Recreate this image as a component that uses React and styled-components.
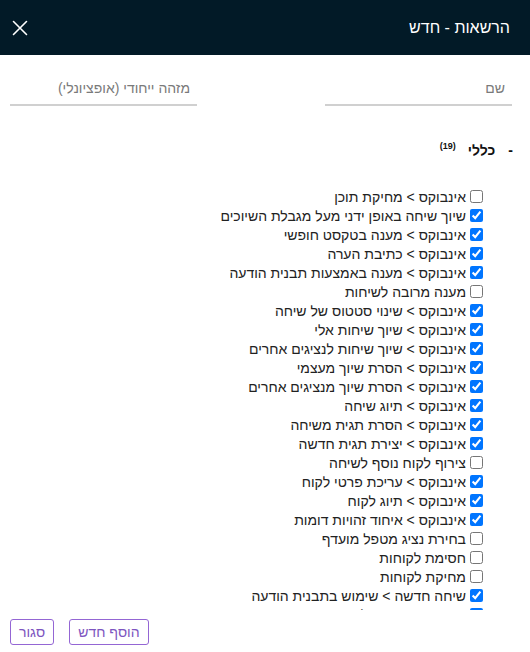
import React from "react";
import styled, { createGlobalStyle } from "styled-components";

const Global = createGlobalStyle`
  html, body { margin: 0; padding: 0; background: #fff; }
  body { font-family: "Liberation Sans", Arial, sans-serif; direction: rtl; }
  * { box-sizing: border-box; }
`;

const Page = styled.div`
  width: 530px;
  height: 652px;
  display: flex;
  flex-direction: column;
  background: #fff;
  overflow: hidden;
`;

const Header = styled.header`
  height: 55px;
  flex: none;
  background: #021a27;
  display: flex;
  align-items: center;
  justify-content: space-between;
  padding: 0 20px 0 12px;
`;

const Title = styled.h1`
  margin: 0;
  font-size: 16px;
  font-weight: normal;
  color: #fff;
`;

const CloseBtn = styled.button`
  border: 0;
  background: none;
  padding: 0;
  width: 16px;
  height: 16px;
  display: flex;
  cursor: pointer;
`;

const FormRow = styled.div`
  display: flex;
  justify-content: space-between;
  padding: 21px 18px 0 10px;
  height: 50px;
  flex: none;
`;

const Field = styled.input`
  width: 187px;
  height: 30px;
  border: 0;
  border-bottom: 2px solid #d0d0d0;
  outline: none;
  padding: 0 7px 5px 7px;
  font-family: inherit;
  font-size: 14px;
  color: #333;
  background: transparent;
  &::placeholder { color: #7a7a7a; }
`;

const Section = styled.div`
  display: flex;
  align-items: center;
  gap: 9px;
  padding: 35px 17px 0 0;
  height: 54px;
  flex: none;
`;

const Dash = styled.span`
  font-weight: bold;
  font-size: 14px;
  color: #111;
  margin-left: 4px;
`;

const SectionName = styled.span`
  font-weight: bold;
  font-size: 14px;
  color: #111;
  display: inline-flex;
  align-items: flex-start;
  gap: 12px;
`;

const Count = styled.span`
  font-size: 9px;
  font-weight: bold;
  line-height: 1;
`;

const List = styled.ul`
  list-style: none;
  margin: 28px 0 0 0;
  padding: 0 47px 0 0;
  height: 423px;
  flex: none;
  overflow-y: auto;
  scrollbar-width: none;
  &::-webkit-scrollbar { display: none; }
`;

const Item = styled.li`
  display: flex;
  align-items: center;
  height: 19px;
  font-size: 14px;
  color: #222;
  white-space: nowrap;
`;

const Check = styled.input`
  width: 13px;
  height: 13px;
  margin: 0 0 0 4px;
  accent-color: #0075ff;
  flex: none;
`;

const Footer = styled.div`
  display: flex;
  gap: 15px;
  justify-content: flex-end;
  padding: 9px 0 0 10px;
`;

const Button = styled.button`
  height: 26px;
  padding: 0 8px;
  border: 1px solid #9466d4;
  border-radius: 3px;
  background: #fff;
  color: #7d55c0;
  font-family: inherit;
  font-size: 14px;
  cursor: pointer;
`;

const items = [
  ["אינבוקס > מחיקת תוכן", false],
  ["שיוך שיחה באופן ידני מעל מגבלת השיוכים", true],
  ["אינבוקס > מענה בטקסט חופשי", true],
  ["אינבוקס > כתיבת הערה", true],
  ["אינבוקס > מענה באמצעות תבנית הודעה", true],
  ["מענה מרובה לשיחות", false],
  ["אינבוקס > שינוי סטטוס של שיחה", true],
  ["אינבוקס > שיוך שיחות אלי", true],
  ["אינבוקס > שיוך שיחות לנציגים אחרים", true],
  ["אינבוקס > הסרת שיוך מעצמי", true],
  ["אינבוקס > הסרת שיוך מנציגים אחרים", true],
  ["אינבוקס > תיוג שיחה", true],
  ["אינבוקס > הסרת תגית משיחה", true],
  ["אינבוקס > יצירת תגית חדשה", true],
  ["צירוף לקוח נוסף לשיחה", false],
  ["אינבוקס > עריכת פרטי לקוח", true],
  ["אינבוקס > תיוג לקוח", true],
  ["אינבוקס > איחוד זהויות דומות", true],
  ["בחירת נציג מטפל מועדף", false],
  ["חסימת לקוחות", false],
  ["מחיקת לקוחות", false],
  ["שיחה חדשה > שימוש בתבנית הודעה", true],
  ["שיחה חדשה > שליחת הודעה חופשית", true],
  ["דוחות > צפייה בדוחות", true],
];

export default function App() {
  return (
    <Page>
      <Global />
      <Header>
        <Title>הרשאות - חדש</Title>
        <CloseBtn aria-label="סגור">
          <svg width="16" height="16" viewBox="0 0 16 16">
            <path d="M1.5 1.5 L14.5 14.5 M14.5 1.5 L1.5 14.5" stroke="#fff" strokeWidth="1.6" strokeLinecap="round" />
          </svg>
        </CloseBtn>
      </Header>
      <FormRow>
        <Field placeholder="שם" />
        <Field placeholder="מזהה ייחודי (אופציונלי)" />
      </FormRow>
      <Section>
        <Dash>-</Dash>
        <SectionName>
          כללי
          <Count>(19)</Count>
        </SectionName>
      </Section>
      <List>
        {items.map(([label, checked], i) => (
          <Item key={i}>
            <Check type="checkbox" defaultChecked={checked} />
            {label}
          </Item>
        ))}
      </List>
      <Footer>
        <Button>הוסף חדש</Button>
        <Button>סגור</Button>
      </Footer>
    </Page>
  );
}
